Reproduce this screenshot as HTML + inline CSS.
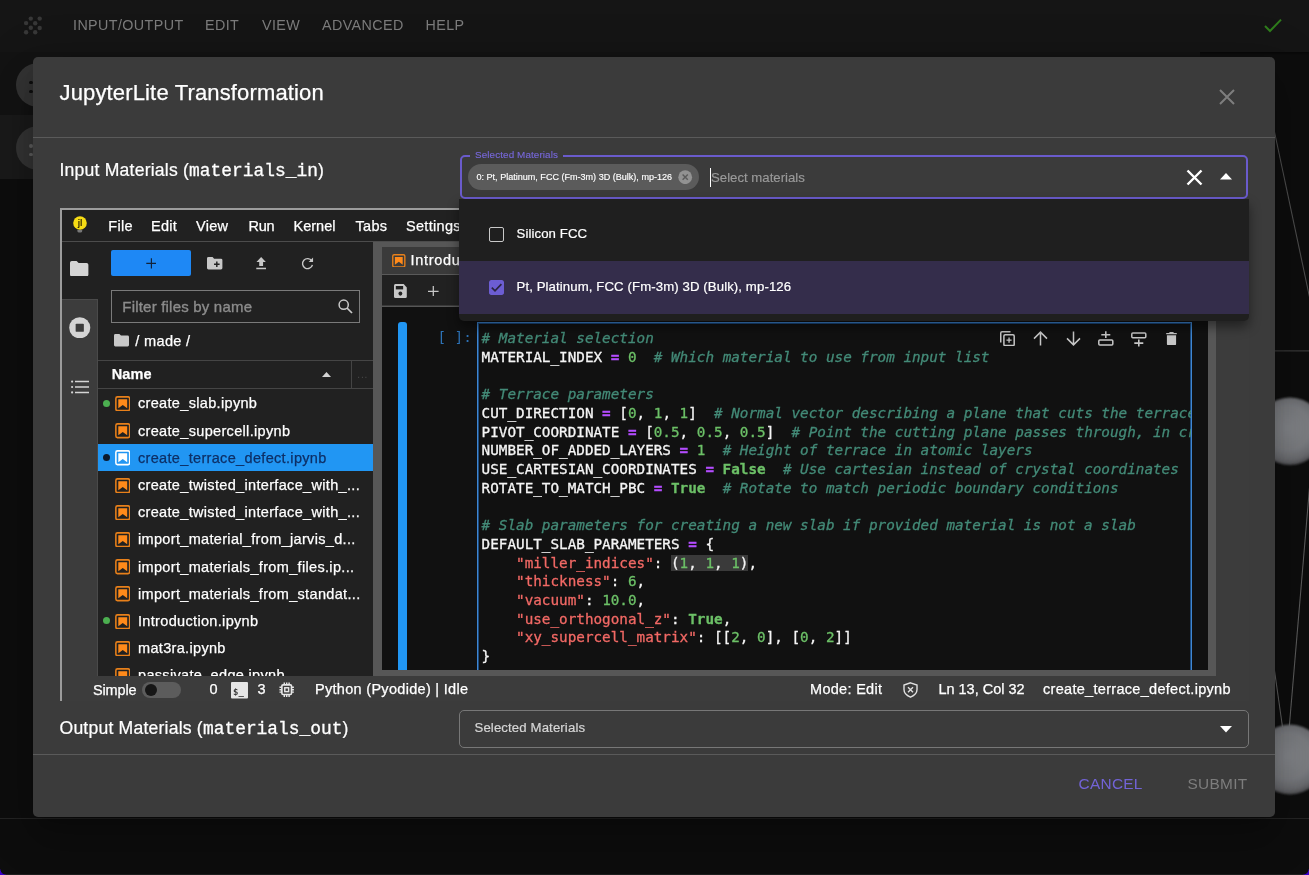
<!DOCTYPE html>
<html lang="en">
<head>
<meta charset="utf-8">
<title>JupyterLite Transformation</title>
<style>
*{box-sizing:border-box;margin:0;padding:0}
html,body{width:1309px;height:875px;overflow:hidden;background:#0d0d0d}
body{position:relative;font-family:"Liberation Sans",Arial,sans-serif;color:#fff}
#root{position:absolute;left:0;top:0;width:1309px;height:875px;overflow:hidden;will-change:transform}
.abs{position:absolute}
/* ---------- background app ---------- */
#topbar{left:0;top:0;width:1309px;height:52px;background:#151515;box-shadow:0 1px 3px rgba(0,0,0,.6)}
#topbar .mi{position:absolute;top:16px;font-size:14.3px;line-height:18px;color:#7c7c7c;letter-spacing:.41px;white-space:nowrap}
#row1{left:0;top:52px;width:1200px;height:63px;background:#131313}
#row2{left:0;top:115px;width:1200px;height:64px;background:#1a1a1a}
.circ{width:44px;height:44px;border-radius:50%;background:#343434}
#botline{left:0;top:817.7px;width:1309px;height:1.2px;background:#242424}
/* ---------- modal ---------- */
#modal{left:33px;top:57px;width:1242px;height:760px;background:#3b3b3b;border-radius:5px;box-shadow:0 12px 16px -8px rgba(0,0,0,.2),0 26px 42px 3px rgba(0,0,0,.14),0 10px 50px 9px rgba(0,0,0,.12)}
#title{left:59.5px;top:79px;font-size:22px;line-height:28px;white-space:nowrap;color:#fff;letter-spacing:.15px;-webkit-text-stroke:.25px}
.hr{height:1px;background:#5a5a5a}
.lbl{font-size:17.6px;line-height:22px;white-space:nowrap;color:#fff;letter-spacing:.2px;-webkit-text-stroke:.22px}
.lbl code{font-family:"Liberation Mono","DejaVu Sans Mono",monospace;font-size:17.9px;-webkit-text-stroke:.3px #fff;letter-spacing:0}
/* ---------- autocomplete ---------- */
#acbox{left:459.5px;top:155px;width:788px;height:44px;border:2px solid #6a5bcc;border-radius:5px}
#aclabel{left:470px;top:148px;padding:0 5px;background:#3b3b3b;color:#7667d8;-webkit-text-stroke:.15px;font-size:9.9px;line-height:13px;letter-spacing:.1px;white-space:nowrap}
#chip{left:468px;top:164px;width:231px;height:26px;border-radius:13px;background:#5b5b5b}
#chip span{position:absolute;left:8.5px;top:6px;font-size:9.06px;-webkit-text-stroke:.15px;line-height:14px;color:#fff;white-space:nowrap}
#chipx{left:678.2px;top:169.7px;width:14.4px;height:14.4px}
#caret{left:710px;top:168px;width:1px;height:19px;background:#fff}
#placeholder{left:711px;top:168px;font-size:13.2px;-webkit-text-stroke:.15px;line-height:19px;color:#9a9a9a;white-space:nowrap}
#popup{left:459px;top:199px;width:790px;height:122px;background:#1f1f1f;border-radius:0 0 5px 5px;box-shadow:0 6px 12px rgba(0,0,0,.45)}
#opt2{left:459px;top:261px;width:790px;height:53px;background:#342d4b}
.opt{font-size:13.2px;letter-spacing:.1px;-webkit-text-stroke:.2px;line-height:18px;color:#fff;white-space:nowrap;left:516.5px}
.cb{left:488.5px;width:15px;height:15px;border-radius:2px}
/* ---------- output select ---------- */
#outbox{left:459px;top:710px;width:789.5px;height:38px;border:1px solid #777;border-radius:5px}
#outlbl{left:474.5px;top:719px;font-size:13.2px;letter-spacing:.12px;-webkit-text-stroke:.2px;line-height:18px;color:#d6d6d6;white-space:nowrap}
.btn{font-size:15.4px;line-height:18px;letter-spacing:.3px;white-space:nowrap;top:775px}

/* ---------- jupyter ---------- */
#jp{left:60px;top:208px;width:1189px;height:493px;overflow:hidden;border-top:2px solid #9c9c9c;border-left:2px solid #9c9c9c;background:#3c3c3c;font-size:14.3px;color:#fff}
#jp .a{position:absolute;white-space:nowrap}
#jp .t{position:absolute;white-space:nowrap;line-height:18px;font-size:14.5px;letter-spacing:.3px;-webkit-text-stroke:.25px}
#jmenu{left:0;top:0;width:1187px;height:31.5px;background:#212121;border-bottom:1px solid #4c4c4c}
#jside{left:0;top:31.5px;width:35.8px;height:57px;background:#212121}
#jfb{left:35.8px;top:31.5px;width:275px;height:434px;background:#212121;overflow:hidden}
#jdock{left:310.8px;top:31.5px;width:843.5px;height:434px;background:#575757}
#jnb{left:320px;top:96.5px;width:826px;height:363.5px;background:#111;overflow:hidden}
.frow{position:absolute;left:0;width:275px;height:27.2px}
.frow .nm{position:absolute;left:40.2px;top:5px;line-height:18px;white-space:nowrap;font-size:14.5px;letter-spacing:.33px;-webkit-text-stroke:.25px}
.frow svg{position:absolute;left:17.2px;top:6.6px;width:15.5px;height:15.5px}
.frow i{position:absolute;left:5px;top:10.3px;width:7px;height:7px;border-radius:50%;background:#4caf50}
#jp #code{left:3.6px;top:6.2px;font-family:"DejaVu Sans Mono","Liberation Mono",monospace;font-size:14.3px;line-height:18.7px;white-space:pre;color:#f5f5f5;-webkit-text-stroke:.3px}
#code .c{color:#438a77;font-style:italic}
#code .o{color:#b44dff;font-weight:bold}
#code .n{color:#6cc067}
#code .k{color:#6cc067;font-weight:bold}
#code .s{color:#f26965}
#code .hl{background:#3a3a3a}
</style>
</head>
<body>
<div id="root">
<!-- background application -->
<div id="topbar" class="abs">
  <span class="mi" style="left:73px">INPUT/OUTPUT</span>
  <span class="mi" style="left:205px">EDIT</span>
  <span class="mi" style="left:262px">VIEW</span>
  <span class="mi" style="left:322px">ADVANCED</span>
  <span class="mi" style="left:425.5px">HELP</span>
</div>
<div id="row1" class="abs"></div>
<div id="row2" class="abs"></div>
<div class="abs circ" style="left:16px;top:63px"></div>
<div class="abs circ" style="left:16px;top:126px"></div>
<div id="botline" class="abs"></div>
<svg class="abs" style="left:22px;top:14px" width="24" height="24" viewBox="22 14 24 24"><g fill="#383838"><circle cx="30.8" cy="18.6" r="2.2"/><circle cx="39.7" cy="18.6" r="2.2"/><circle cx="26.1" cy="23.1" r="2.2"/><circle cx="35.2" cy="23.2" r="2.2"/><circle cx="30.8" cy="27.8" r="2.2"/><circle cx="39.7" cy="28" r="2.2"/><circle cx="26.1" cy="32.3" r="2.2"/><circle cx="35.2" cy="32.3" r="2.2"/></g></svg>
<svg class="abs" style="left:1262px;top:16px" width="22" height="18" viewBox="0 0 22 18"><path d="M3 10 L8 15 L19 3.6" fill="none" stroke="#2f7d1c" stroke-width="2"/></svg>
<!-- circle button glyphs -->
<div class="abs" style="left:28.9px;top:80.5px;width:3.8px;height:3.8px;border-radius:50%;background:#0e0e0e"></div>
<div class="abs" style="left:28.9px;top:89.6px;width:3.8px;height:3.8px;border-radius:50%;background:#0e0e0e"></div>
<div class="abs" style="left:28.9px;top:143.9px;width:3.8px;height:3.8px;border-radius:50%;background:#5e5e5e"></div>
<div class="abs" style="left:28.9px;top:152.6px;width:3.8px;height:3.8px;border-radius:50%;background:#5e5e5e"></div>
<!-- 3D viewer remnants on the right -->
<svg class="abs" style="left:1260px;top:52px" width="49" height="766" viewBox="1260 52 49 766">
  <defs>
    <radialGradient id="sph" cx="47%" cy="45%" r="56%"><stop offset="0" stop-color="#838589"/><stop offset=".6" stop-color="#7a7c80"/><stop offset=".85" stop-color="#696a6e"/><stop offset="1" stop-color="#4c4c4f"/></radialGradient>
    <filter id="bl" x="-10%" y="-10%" width="120%" height="120%"><feGaussianBlur stdDeviation="1.1"/></filter>
  </defs>
  <path d="M1270.5 113 L1311 304" stroke="#4e4e4e" stroke-width="1.1" fill="none"/>
  <path d="M1275 350.8 H1309" stroke="#383838" stroke-width="1.2"/>
  <path d="M1311 470 L1289 730" stroke="#5c5c5c" stroke-width="1.1" fill="none"/>
  <path d="M1273 660 L1282.5 727" stroke="#5c5c5c" stroke-width="1.1" fill="none"/>
  <circle cx="1290" cy="431.3" r="33.8" fill="url(#sph)" filter="url(#bl)"/>
  <circle cx="1290" cy="759.5" r="35" fill="url(#sph)" filter="url(#bl)"/>
</svg>
<div class="abs" style="left:0;top:873.8px;width:1309px;height:1.2px;background:#1f1f1f"></div>
<div class="abs" style="left:0;top:869px;width:6px;height:6px;background:radial-gradient(circle at 100% 0,rgba(58,0,200,0) 5.3px,#3a00c8 6px)"></div>
<div class="abs" style="left:1303px;top:869px;width:6px;height:6px;background:radial-gradient(circle at 0 0,rgba(58,0,200,0) 5.3px,#3a00c8 6px)"></div>


<!-- modal dialog -->
<div id="modal" class="abs"></div>
<div id="title" class="abs">JupyterLite Transformation</div>
<div class="abs hr" style="left:33px;top:137px;width:1242px"></div>
<div class="abs lbl" style="left:59.5px;top:159px">Input Materials (<code>materials_in</code>)</div>
<div class="abs lbl" style="left:59.5px;top:717px">Output Materials (<code>materials_out</code>)</div>
<div class="abs hr" style="left:33px;top:754px;width:1242px"></div>
<!-- close X -->
<svg class="abs" style="left:1214.5px;top:85px" width="24" height="24" viewBox="0 0 24 24"><path d="M5 5 L19 19 M19 5 L5 19" stroke="#7e7e7e" stroke-width="2" fill="none"/></svg>

<!-- embedded JupyterLite -->
<div id="jp" class="abs">
  <div id="jmenu" class="a">
    <svg class="a" style="left:9.6px;top:4.7px" width="16" height="20" viewBox="0 0 16 20"><circle cx="8" cy="8" r="6.8" fill="#f6dc14"/><path d="M5.3 14.9 H10.3 L10 17 Q7.8 18 5.6 17 Z" fill="#777"/><text x="8" y="11.2" font-size="8.5" font-family="Liberation Sans,sans-serif" text-anchor="middle" fill="#2e2600" font-weight="bold">jl</text></svg>
    <span class="t" style="left:46.3px;top:7px">File</span>
    <span class="t" style="left:89px;top:7px">Edit</span>
    <span class="t" style="left:134px;top:7px">View</span>
    <span class="t" style="left:186.5px;top:7px;letter-spacing:-.3px">Run</span>
    <span class="t" style="left:231.5px;top:7px;letter-spacing:0">Kernel</span>
    <span class="t" style="left:293.5px;top:7px">Tabs</span>
    <span class="t" style="left:344px;top:7px">Settings</span>
    <span class="t" style="left:414px;top:7px">Help</span>
  </div>
  <!-- left sidebar -->
  <div id="jside" class="a"></div>
  <svg class="a" style="left:8.4px;top:51px" width="18.4" height="15.4" viewBox="0 0 18.4 15.4"><path d="M1.8 0 H6.6 L8.6 2 H16.6 Q18.4 2 18.4 3.8 V13.6 Q18.4 15.4 16.6 15.4 H1.8 Q0 15.4 0 13.6 V1.8 Q0 0 1.8 0 Z" fill="#d4d4d4"/></svg>
  <svg class="a" style="left:7px;top:106.5px" width="21.5" height="21.5" viewBox="0 0 22 22"><circle cx="11" cy="11" r="10.8" fill="#d4d4d4"/><rect x="6.8" y="6.8" width="8.4" height="8.4" rx="1" fill="#3c3c3c"/></svg>
  <svg class="a" style="left:8.5px;top:169.5px" width="18" height="14" viewBox="0 0 18 14"><path d="M4 1.6 H18 M4 7 H18 M4 12.4 H18" stroke="#d4d4d4" stroke-width="1.5"/><circle cx="1.1" cy="1.6" r="1.1" fill="#d4d4d4"/><circle cx="1.1" cy="7" r="1.1" fill="#d4d4d4"/><circle cx="1.1" cy="12.4" r="1.1" fill="#d4d4d4"/></svg>
  <div class="a" style="left:0;top:88.5px;width:35.8px;height:377px;border-top:1px solid #4a4a4a;border-right:1px solid #4a4a4a"></div>
  <!-- file browser -->
  <div id="jfb" class="a">
    <div class="a" style="left:13.2px;top:8.3px;width:80px;height:26.4px;background:#1e88f5;border-radius:2px"></div>
    <svg class="a" style="left:47.9px;top:16.8px" width="10.8" height="10.8" viewBox="0 0 12 12"><path d="M6 0.3 V11.7 M0.3 6 H11.7" stroke="#12233a" stroke-width="1.3"/></svg>
    <svg class="a" style="left:109.7px;top:15.6px" width="15.4" height="12.5" viewBox="0 0 16 13"><path d="M1.5 0 H5.8 L7.4 1.7 H14.5 Q16 1.7 16 3.2 V11.5 Q16 13 14.5 13 H1.5 Q0 13 0 11.5 V1.5 Q0 0 1.5 0 Z" fill="#c8c8c8"/><path d="M10.2 4.6 V10.4 M7.3 7.5 H13.1" stroke="#212121" stroke-width="1.5"/></svg>
    <svg class="a" style="left:158.1px;top:15.8px" width="10.3" height="12.5" viewBox="0 0 11.5 14"><path d="M5.75 0 L11 5.6 H7.9 V10 H3.6 V5.6 H0.5 Z" fill="#c8c8c8"/><rect x="0.3" y="12" width="10.9" height="1.7" fill="#c8c8c8"/></svg>
    <svg class="a" style="left:202.8px;top:15.6px" width="13" height="13" viewBox="0 0 14 14"><path d="M11.6 4.2 A5.4 5.4 0 1 0 12.3 8.4" fill="none" stroke="#c8c8c8" stroke-width="1.5"/><path d="M8.2 5.4 H13 V0.6 Z" fill="#c8c8c8"/></svg>
    <div class="a" style="left:13.2px;top:48.9px;width:249px;height:32.4px;border:1px solid #7a7a7a"></div>
    <span class="t" style="left:24.5px;top:56.5px;color:#8c8c8c;font-size:15px;letter-spacing:.2px;-webkit-text-stroke:.35px">Filter files by name</span>
    <svg class="a" style="left:240px;top:57.6px" width="15" height="15" viewBox="0 0 15 15"><circle cx="5.7" cy="5.7" r="4.6" fill="none" stroke="#c8c8c8" stroke-width="1.5"/><path d="M9 9 L14 14" stroke="#c8c8c8" stroke-width="1.7"/></svg>
    <svg class="a" style="left:16.5px;top:92.5px" width="15" height="12.5" viewBox="0 0 15 12.5"><path d="M1.4 0 H5.4 L7 1.6 H13.6 Q15 1.6 15 3 V11.1 Q15 12.5 13.6 12.5 H1.4 Q0 12.5 0 11.1 V1.4 Q0 0 1.4 0 Z" fill="#c8c8c8"/></svg>
    <span class="t" style="left:37.5px;top:90.5px;font-size:14.6px">/ made /</span>
    <div class="a" style="left:0;top:118.6px;width:275px;height:1px;background:#454545"></div>
    <span class="t" style="left:14px;top:123.3px;font-weight:bold;letter-spacing:.1px">Name</span>
    <svg class="a" style="left:224px;top:130px" width="9" height="5" viewBox="0 0 9 5"><path d="M0 5 L4.5 0 L9 5 Z" fill="#d4d4d4"/></svg>
    <div class="a" style="left:253.5px;top:119.6px;width:1px;height:27px;background:#444"></div>
    <span class="t" style="left:259.5px;top:124px;color:#484848;font-size:10px;letter-spacing:.8px;-webkit-text-stroke:0">...</span>
    <div class="a" style="left:0;top:146.6px;width:275px;height:1px;background:#454545"></div>
    <div class="frow" style="top:147.9px;"><i></i><svg viewBox="0 0 16 16"><rect x="0.9" y="0.9" width="14.2" height="14.2" rx="1.6" fill="none" stroke="#e8801a" stroke-width="1.6"/><path d="M3.4 3.4 H12.6 V12.6 L8 9.2 L3.4 12.6 Z" fill="#ff8a1a"/></svg><span class="nm">create_slab.ipynb</span></div>
    <div class="frow" style="top:175.1px;"><svg viewBox="0 0 16 16"><rect x="0.9" y="0.9" width="14.2" height="14.2" rx="1.6" fill="none" stroke="#e8801a" stroke-width="1.6"/><path d="M3.4 3.4 H12.6 V12.6 L8 9.2 L3.4 12.6 Z" fill="#ff8a1a"/></svg><span class="nm">create_supercell.ipynb</span></div>
    <div class="frow" style="top:202.3px;background:#2196f3;"><i style="background:#0b1a2e"></i><svg viewBox="0 0 16 16"><rect x="0.9" y="0.9" width="14.2" height="14.2" rx="1.6" fill="none" stroke="#fff" stroke-width="1.6"/><path d="M3.4 3.4 H12.6 V12.6 L8 9.2 L3.4 12.6 Z" fill="#fff"/></svg><span class="nm" style="color:#0d2f66">create_terrace_defect.ipynb</span></div>
    <div class="frow" style="top:229.5px;"><svg viewBox="0 0 16 16"><rect x="0.9" y="0.9" width="14.2" height="14.2" rx="1.6" fill="none" stroke="#e8801a" stroke-width="1.6"/><path d="M3.4 3.4 H12.6 V12.6 L8 9.2 L3.4 12.6 Z" fill="#ff8a1a"/></svg><span class="nm">create_twisted_interface_with_...</span></div>
    <div class="frow" style="top:256.7px;"><svg viewBox="0 0 16 16"><rect x="0.9" y="0.9" width="14.2" height="14.2" rx="1.6" fill="none" stroke="#e8801a" stroke-width="1.6"/><path d="M3.4 3.4 H12.6 V12.6 L8 9.2 L3.4 12.6 Z" fill="#ff8a1a"/></svg><span class="nm">create_twisted_interface_with_...</span></div>
    <div class="frow" style="top:283.9px;"><svg viewBox="0 0 16 16"><rect x="0.9" y="0.9" width="14.2" height="14.2" rx="1.6" fill="none" stroke="#e8801a" stroke-width="1.6"/><path d="M3.4 3.4 H12.6 V12.6 L8 9.2 L3.4 12.6 Z" fill="#ff8a1a"/></svg><span class="nm">import_material_from_jarvis_d...</span></div>
    <div class="frow" style="top:311.1px;"><svg viewBox="0 0 16 16"><rect x="0.9" y="0.9" width="14.2" height="14.2" rx="1.6" fill="none" stroke="#e8801a" stroke-width="1.6"/><path d="M3.4 3.4 H12.6 V12.6 L8 9.2 L3.4 12.6 Z" fill="#ff8a1a"/></svg><span class="nm">import_materials_from_files.ip...</span></div>
    <div class="frow" style="top:338.3px;"><svg viewBox="0 0 16 16"><rect x="0.9" y="0.9" width="14.2" height="14.2" rx="1.6" fill="none" stroke="#e8801a" stroke-width="1.6"/><path d="M3.4 3.4 H12.6 V12.6 L8 9.2 L3.4 12.6 Z" fill="#ff8a1a"/></svg><span class="nm">import_materials_from_standat...</span></div>
    <div class="frow" style="top:365.5px;"><i></i><svg viewBox="0 0 16 16"><rect x="0.9" y="0.9" width="14.2" height="14.2" rx="1.6" fill="none" stroke="#e8801a" stroke-width="1.6"/><path d="M3.4 3.4 H12.6 V12.6 L8 9.2 L3.4 12.6 Z" fill="#ff8a1a"/></svg><span class="nm">Introduction.ipynb</span></div>
    <div class="frow" style="top:392.7px;"><svg viewBox="0 0 16 16"><rect x="0.9" y="0.9" width="14.2" height="14.2" rx="1.6" fill="none" stroke="#e8801a" stroke-width="1.6"/><path d="M3.4 3.4 H12.6 V12.6 L8 9.2 L3.4 12.6 Z" fill="#ff8a1a"/></svg><span class="nm">mat3ra.ipynb</span></div>
    <div class="frow" style="top:419.9px;"><svg viewBox="0 0 16 16"><rect x="0.9" y="0.9" width="14.2" height="14.2" rx="1.6" fill="none" stroke="#e8801a" stroke-width="1.6"/><path d="M3.4 3.4 H12.6 V12.6 L8 9.2 L3.4 12.6 Z" fill="#ff8a1a"/></svg><span class="nm">passivate_edge.ipynb</span></div>
  </div>
  <!-- main dock -->
  <div id="jdock" class="a"></div>
  <div class="a" style="left:320px;top:36.6px;width:110px;height:28.2px;background:#3a3a3a;border-bottom:1px solid #5a5a5a"></div>
  <svg class="a" style="left:330.2px;top:43.5px;width:13.6px;height:13.6px" viewBox="0 0 16 16"><rect x="0.9" y="0.9" width="14.2" height="14.2" rx="1.6" fill="none" stroke="#e8801a" stroke-width="1.6"/><path d="M3.4 3.4 H12.6 V12.6 L8 9.2 L3.4 12.6 Z" fill="#ff8a1a"/></svg>
  <span class="t" style="left:348.5px;top:40.5px;letter-spacing:.7px">Introduction.ipynb</span>
  <div class="a" style="left:320px;top:64.8px;width:826px;height:31.7px;background:#212121;border-bottom:1px solid #3a3a3a"></div>
  <svg class="a" style="left:331.8px;top:74px" width="12.8" height="14" viewBox="0 0 14 14" preserveAspectRatio="none"><path d="M1.5 0 H10.6 L14 3.4 V12.5 Q14 14 12.5 14 H1.5 Q0 14 0 12.5 V1.5 Q0 0 1.5 0 Z" fill="#c8c8c8"/><rect x="2" y="2" width="8" height="3.4" fill="#212121"/><circle cx="7" cy="9.6" r="2.1" fill="#212121"/></svg>
  <svg class="a" style="left:366px;top:75.7px" width="10.6" height="10.6" viewBox="0 0 11 11"><path d="M5.5 0 V11 M0 5.5 H11" stroke="#c8c8c8" stroke-width="1.3"/></svg>
  <!-- notebook -->
  <div id="jnb" class="a">
    <div class="a" style="left:15.8px;top:15.7px;width:9.2px;height:360px;background:#2196f3;border-radius:3px 3px 0 0"></div>
    <span class="a" style="left:55.4px;top:21.6px;font-family:'DejaVu Sans Mono','Liberation Mono',monospace;font-size:14.3px;line-height:18.7px;color:#2d72b6;white-space:pre">[ ]:</span>
    <div class="a" style="left:95px;top:15.5px;width:715px;height:360px;border:1px solid #3f86d2;box-shadow:inset 0 0 0 1px #1b4a7e;background:#111;overflow:hidden">
      <div id="code" class="a"><span class="c"># Material selection</span>
MATERIAL_INDEX <span class="o">=</span> <span class="n">0</span>  <span class="c"># Which material to use from input list</span>

<span class="c"># Terrace parameters</span>
CUT_DIRECTION <span class="o">=</span> [<span class="n">0</span>, <span class="n">1</span>, <span class="n">1</span>]  <span class="c"># Normal vector describing a plane that cuts the terrace from added layers (Miller indices)</span>
PIVOT_COORDINATE <span class="o">=</span> [<span class="n">0.5</span>, <span class="n">0.5</span>, <span class="n">0.5</span>]  <span class="c"># Point the cutting plane passes through, in crystal coordinates</span>
NUMBER_OF_ADDED_LAYERS <span class="o">=</span> <span class="n">1</span>  <span class="c"># Height of terrace in atomic layers</span>
USE_CARTESIAN_COORDINATES <span class="o">=</span> <span class="k">False</span>  <span class="c"># Use cartesian instead of crystal coordinates</span>
ROTATE_TO_MATCH_PBC <span class="o">=</span> <span class="k">True</span>  <span class="c"># Rotate to match periodic boundary conditions</span>

<span class="c"># Slab parameters for creating a new slab if provided material is not a slab</span>
DEFAULT_SLAB_PARAMETERS <span class="o">=</span> {
    <span class="s">"miller_indices"</span>: <span class="hl">(<span class="n">1</span>, <span class="n">1</span>, <span class="n">1</span>)</span>,
    <span class="s">"thickness"</span>: <span class="n">6</span>,
    <span class="s">"vacuum"</span>: <span class="n">10.0</span>,
    <span class="s">"use_orthogonal_z"</span>: <span class="k">True</span>,
    <span class="s">"xy_supercell_matrix"</span>: [[<span class="n">2</span>, <span class="n">0</span>], [<span class="n">0</span>, <span class="n">2</span>]]
}</div>
    </div>
    <svg class="a" style="left:617.5px;top:24.4px" width="15" height="15.4" viewBox="0 0 15 15.4"><path d="M0.75 11.5 V2 Q0.75 0.75 2 0.75 H10.5" fill="none" stroke="#c6c6c6" stroke-width="1.5"/><rect x="3.9" y="3.7" width="10.3" height="10.9" rx="1.2" fill="none" stroke="#c6c6c6" stroke-width="1.5"/><path d="M9.05 6.6 V11.7 M6.5 9.15 H11.6" stroke="#c6c6c6" stroke-width="1.3"/></svg>
    <svg class="a" style="left:650.5px;top:24.7px" width="15" height="15" viewBox="0 0 15 15"><path d="M7.5 14.6 V1.4 M1 7.6 L7.5 1.1 L14 7.6" fill="none" stroke="#c6c6c6" stroke-width="1.5"/></svg>
    <svg class="a" style="left:683.6px;top:24.7px" width="15" height="15" viewBox="0 0 15 15"><path d="M7.5 0.4 V13.6 M1 7.4 L7.5 13.9 L14 7.4" fill="none" stroke="#c6c6c6" stroke-width="1.5"/></svg>
    <svg class="a" style="left:716.2px;top:24.7px" width="15.6" height="15" viewBox="0 0 15.6 15"><rect x="0.8" y="9" width="14" height="4.9" rx="1" fill="none" stroke="#c6c6c6" stroke-width="1.5"/><path d="M7.8 0.2 V7 M3.3 3.7 H12.3" stroke="#c6c6c6" stroke-width="1.6"/></svg>
    <svg class="a" style="left:749.3px;top:25.3px" width="15.6" height="15" viewBox="0 0 15.6 15"><rect x="0.8" y="0.9" width="14" height="4.9" rx="1" fill="none" stroke="#c6c6c6" stroke-width="1.5"/><path d="M7.8 7.4 V14.6 M3.3 11.1 H12.3" stroke="#c6c6c6" stroke-width="1.6"/></svg>
    <svg class="a" style="left:784.4px;top:25.3px" width="11" height="13.4" viewBox="0 0 11 13.4"><path d="M0.2 1 H10.8 V2.2 H0.2 Z M3.4 0 H7.6 V1 H3.4 Z" fill="#c6c6c6"/><path d="M0.9 3.2 H10.1 V11.8 Q10.1 13.4 8.5 13.4 H2.5 Q0.9 13.4 0.9 11.8 Z" fill="#c6c6c6"/></svg>
  </div>
  <!-- status bar -->
  <span class="t" style="left:31px;top:471px;letter-spacing:-.15px">Simple</span>
  <div class="a" style="left:80.4px;top:472.2px;width:38.6px;height:16px;border-radius:8px;background:#5c5c5c"></div>
  <div class="a" style="left:82.6px;top:474.2px;width:12px;height:12px;border-radius:50%;background:#161616"></div>
  <span class="t" style="left:147.5px;top:469.6px">0</span>
  <svg class="a" style="left:168.6px;top:472.2px" width="17" height="16.4" viewBox="0 0 17 16.4"><rect width="17" height="16.4" rx="1" fill="#e6e6e6"/><text x="2" y="12.6" font-family="DejaVu Sans Mono,monospace" font-size="9" font-weight="bold" fill="#3c3c3c">$_</text></svg>
  <span class="t" style="left:195.5px;top:469.6px">3</span>
  <svg class="a" style="left:216.5px;top:471.5px" width="15.4" height="15.4" viewBox="0 0 16 16"><rect x="3" y="3" width="10" height="10" rx="1.2" fill="none" stroke="#e6e6e6" stroke-width="1.7"/><rect x="6" y="6" width="4" height="4" fill="none" stroke="#e6e6e6" stroke-width="1.5"/><path d="M5.5 0.5 V3 M8 0.5 V3 M10.5 0.5 V3 M5.5 13 V15.5 M8 13 V15.5 M10.5 13 V15.5 M0.5 5.5 H3 M0.5 8 H3 M0.5 10.5 H3 M13 5.5 H15.5 M13 8 H15.5 M13 10.5 H15.5" stroke="#e6e6e6" stroke-width="1.5"/></svg>
  <span class="t" style="left:253px;top:469.6px">Python (Pyodide) | Idle</span>
  <span class="t" style="left:748px;top:469.6px">Mode: Edit</span>
  <svg class="a" style="left:840.5px;top:471.5px" width="15" height="16" viewBox="0 0 15 16"><path d="M7.5 0.8 L14 3 V7.6 Q14 12.6 7.5 15.2 Q1 12.6 1 7.6 V3 Z" fill="none" stroke="#e0e0e0" stroke-width="1.4"/><path d="M5 5.2 L10 10.2 M10 5.2 L5 10.2" stroke="#e0e0e0" stroke-width="1.4"/></svg>
  <span class="t" style="left:876.4px;top:469.6px;letter-spacing:0">Ln 13, Col 32</span>
  <span class="t" style="left:981px;top:469.6px">create_terrace_defect.ipynb</span>
</div>


<!-- input autocomplete -->
<div id="acbox" class="abs"></div>
<div id="aclabel" class="abs">Selected Materials</div>
<div id="chip" class="abs"><span>0: Pt, Platinum, FCC (Fm-3m) 3D (Bulk), mp-126</span></div>
<svg id="chipx" class="abs" viewBox="0 0 15 15"><circle cx="7.5" cy="7.5" r="7.2" fill="#929292"/><path d="M4.8 4.8 L10.2 10.2 M10.2 4.8 L4.8 10.2" stroke="#5b5b5b" stroke-width="1.5" fill="none"/></svg>
<div id="caret" class="abs"></div>
<div id="placeholder" class="abs">Select materials</div>
<svg class="abs" style="left:1186px;top:169px" width="17" height="17" viewBox="0 0 17 17"><path d="M1.5 1.5 L15.5 15.5 M15.5 1.5 L1.5 15.5" stroke="#fff" stroke-width="2.4" fill="none"/></svg>
<svg class="abs" style="left:1219.5px;top:173px" width="12" height="7" viewBox="0 0 12 7"><path d="M0 6.5 L6 0 L12 6.5 Z" fill="#fff"/></svg>
<div id="popup" class="abs"></div>
<div id="opt2" class="abs"></div>
<div class="abs cb" style="top:226.5px;border:1.7px solid #c9c9c9"></div>
<div class="abs opt" style="top:224.5px">Silicon FCC</div>
<svg class="abs cb" style="top:279.5px" viewBox="0 0 15 15"><rect x="0" y="0" width="15" height="15" rx="1.8" fill="#6c5dd3"/><path d="M2.8 7.6 L6 10.8 L12.4 4.2" stroke="#2b2540" stroke-width="1.7" fill="none"/></svg>
<div class="abs opt" style="top:277.5px">Pt, Platinum, FCC (Fm-3m) 3D (Bulk), mp-126</div>

<!-- output select -->
<div id="outbox" class="abs"></div>
<div id="outlbl" class="abs">Selected Materials</div>
<svg class="abs" style="left:1220px;top:726px" width="12" height="7" viewBox="0 0 12 7"><path d="M0 0 L12 0 L6 6.5 Z" fill="#fff"/></svg>
<div class="abs btn" style="left:1078.5px;color:#7263d6">CANCEL</div>
<div class="abs btn" style="left:1187.5px;color:#7d7d7d">SUBMIT</div>
</div>
</body>
</html>
